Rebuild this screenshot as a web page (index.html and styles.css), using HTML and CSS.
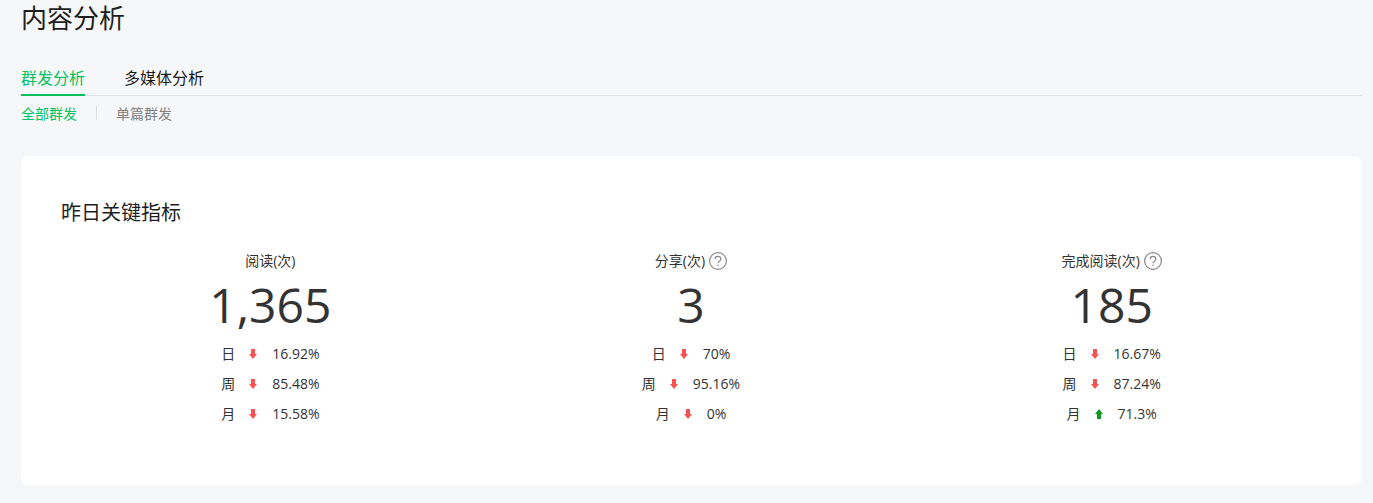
FILE: index.html
```html
<!DOCTYPE html>
<html lang="zh-CN">
<head>
<meta charset="utf-8">
<title>内容分析</title>
<link rel="stylesheet" href="styles.css">
</head>
<body>
<div class="page">
  <h1 class="title">内容分析</h1>
  <nav class="tabs">
    <a class="tab active">群发分析</a>
    <a class="tab">多媒体分析</a>
  </nav>
  <nav class="subtabs">
    <a class="subtab active">全部群发</a>
    <span class="divider"></span>
    <a class="subtab">单篇群发</a>
  </nav>
  <section class="card">
    <h2 class="card-title">昨日关键指标</h2>
    <div class="metrics">
      <div class="metric">
        <div class="label">阅读(次)</div>
        <div class="value">1,365</div>
        <div class="row"><span>日</span><svg class="arrow down" viewBox="0 0 8 10"><path d="M2 0h4v5h2L4 10 0 5h2z"/></svg><span>16.92%</span></div>
        <div class="row"><span>周</span><svg class="arrow down" viewBox="0 0 8 10"><path d="M2 0h4v5h2L4 10 0 5h2z"/></svg><span>85.48%</span></div>
        <div class="row"><span>月</span><svg class="arrow down" viewBox="0 0 8 10"><path d="M2 0h4v5h2L4 10 0 5h2z"/></svg><span>15.58%</span></div>
      </div>
      <div class="metric">
        <div class="label">分享(次)<svg class="help" viewBox="0 0 18 18"><circle cx="9" cy="9" r="8.4"/><path d="M6.2 7.1c0-1.6 1.2-2.7 2.8-2.7s2.8 1.1 2.8 2.5c0 1.1-.6 1.7-1.5 2.3-.9.6-1.3 1.1-1.3 2.1"/><path d="M9 12.6v1.4"/></svg></div>
        <div class="value">3</div>
        <div class="row"><span>日</span><svg class="arrow down" viewBox="0 0 8 10"><path d="M2 0h4v5h2L4 10 0 5h2z"/></svg><span>70%</span></div>
        <div class="row"><span>周</span><svg class="arrow down" viewBox="0 0 8 10"><path d="M2 0h4v5h2L4 10 0 5h2z"/></svg><span>95.16%</span></div>
        <div class="row"><span>月</span><svg class="arrow down" viewBox="0 0 8 10"><path d="M2 0h4v5h2L4 10 0 5h2z"/></svg><span>0%</span></div>
      </div>
      <div class="metric">
        <div class="label">完成阅读(次)<svg class="help" viewBox="0 0 18 18"><circle cx="9" cy="9" r="8.4"/><path d="M6.2 7.1c0-1.6 1.2-2.7 2.8-2.7s2.8 1.1 2.8 2.5c0 1.1-.6 1.7-1.5 2.3-.9.6-1.3 1.1-1.3 2.1"/><path d="M9 12.6v1.4"/></svg></div>
        <div class="value">185</div>
        <div class="row"><span>日</span><svg class="arrow down" viewBox="0 0 8 10"><path d="M2 0h4v5h2L4 10 0 5h2z"/></svg><span>16.67%</span></div>
        <div class="row"><span>周</span><svg class="arrow down" viewBox="0 0 8 10"><path d="M2 0h4v5h2L4 10 0 5h2z"/></svg><span>87.24%</span></div>
        <div class="row"><span>月</span><svg class="arrow up" viewBox="0 0 8 10"><path d="M2 10h4V5h2L4 0 0 5h2z"/></svg><span>71.3%</span></div>
      </div>
    </div>
  </section>
</div>
</body>
</html>
```
FILE: styles.css
```css
* { box-sizing: border-box; }
html, body { margin: 0; height: 100%; }
body {
  background: #f6f7f9;
  color: #262626;
  font-family: "Open Sans", "Noto Sans CJK SC", sans-serif;
  overflow: hidden;
}
.page { padding: 0 11px 0 21px; }
.title {
  margin: 0;
  height: 36px;
  font-size: 26px;
  font-weight: 400;
  line-height: 36px;
  color: #1f1f1f;
}
.tabs {
  display: flex;
  gap: 39px;
  margin-top: 26px;
  height: 34px;
  border-bottom: 1px solid #e1e3e8;
}
.tab {
  height: 34px;
  font-size: 16px;
  line-height: 33px;
  color: #1a1a1a;
}
.tab.active {
  color: #07c160;
  border-bottom: 2px solid #07c160;
}
.subtabs {
  display: flex;
  align-items: center;
  height: 34px;
  font-size: 14px;
  color: #808080;
}
.subtab.active { color: #07c160; }
.divider {
  width: 1px;
  height: 14px;
  margin: 0 19px;
  background: #dcdee3;
}
.card {
  margin-top: 26px;
  height: 329px;
  padding: 40px 40px 0;
  background: #fff;
  border-radius: 8px;
}
.card-title {
  margin: 1px 0 0;
  font-size: 20px;
  font-weight: 400;
  line-height: 32px;
  color: #1f1f1f;
}
.metrics {
  display: grid;
  grid-template-columns: repeat(3, 1fr);
  margin: 21px 0 0 -1px;
}
.metric {
  display: flex;
  flex-direction: column;
  align-items: center;
}
.label {
  display: flex;
  align-items: center;
  height: 20px;
  font-size: 14px;
  color: #333;
}
.help {
  width: 18px;
  height: 18px;
  margin: 2px 0 0 4px;
  fill: none;
  stroke: #888;
  stroke-width: 1.2;
}
.value {
  height: 68px;
  font-size: 48px;
  line-height: 70px;
  color: #333;
}
.row {
  display: flex;
  align-items: center;
  gap: 15px;
  height: 30px;
  font-size: 14px;
  color: #333;
}
.arrow { width: 8px; height: 10px; margin-left: -1px; margin-top: 2px; }
.arrow.down { fill: #fa5151; }
.arrow.up { fill: #0a9a1c; }
```
